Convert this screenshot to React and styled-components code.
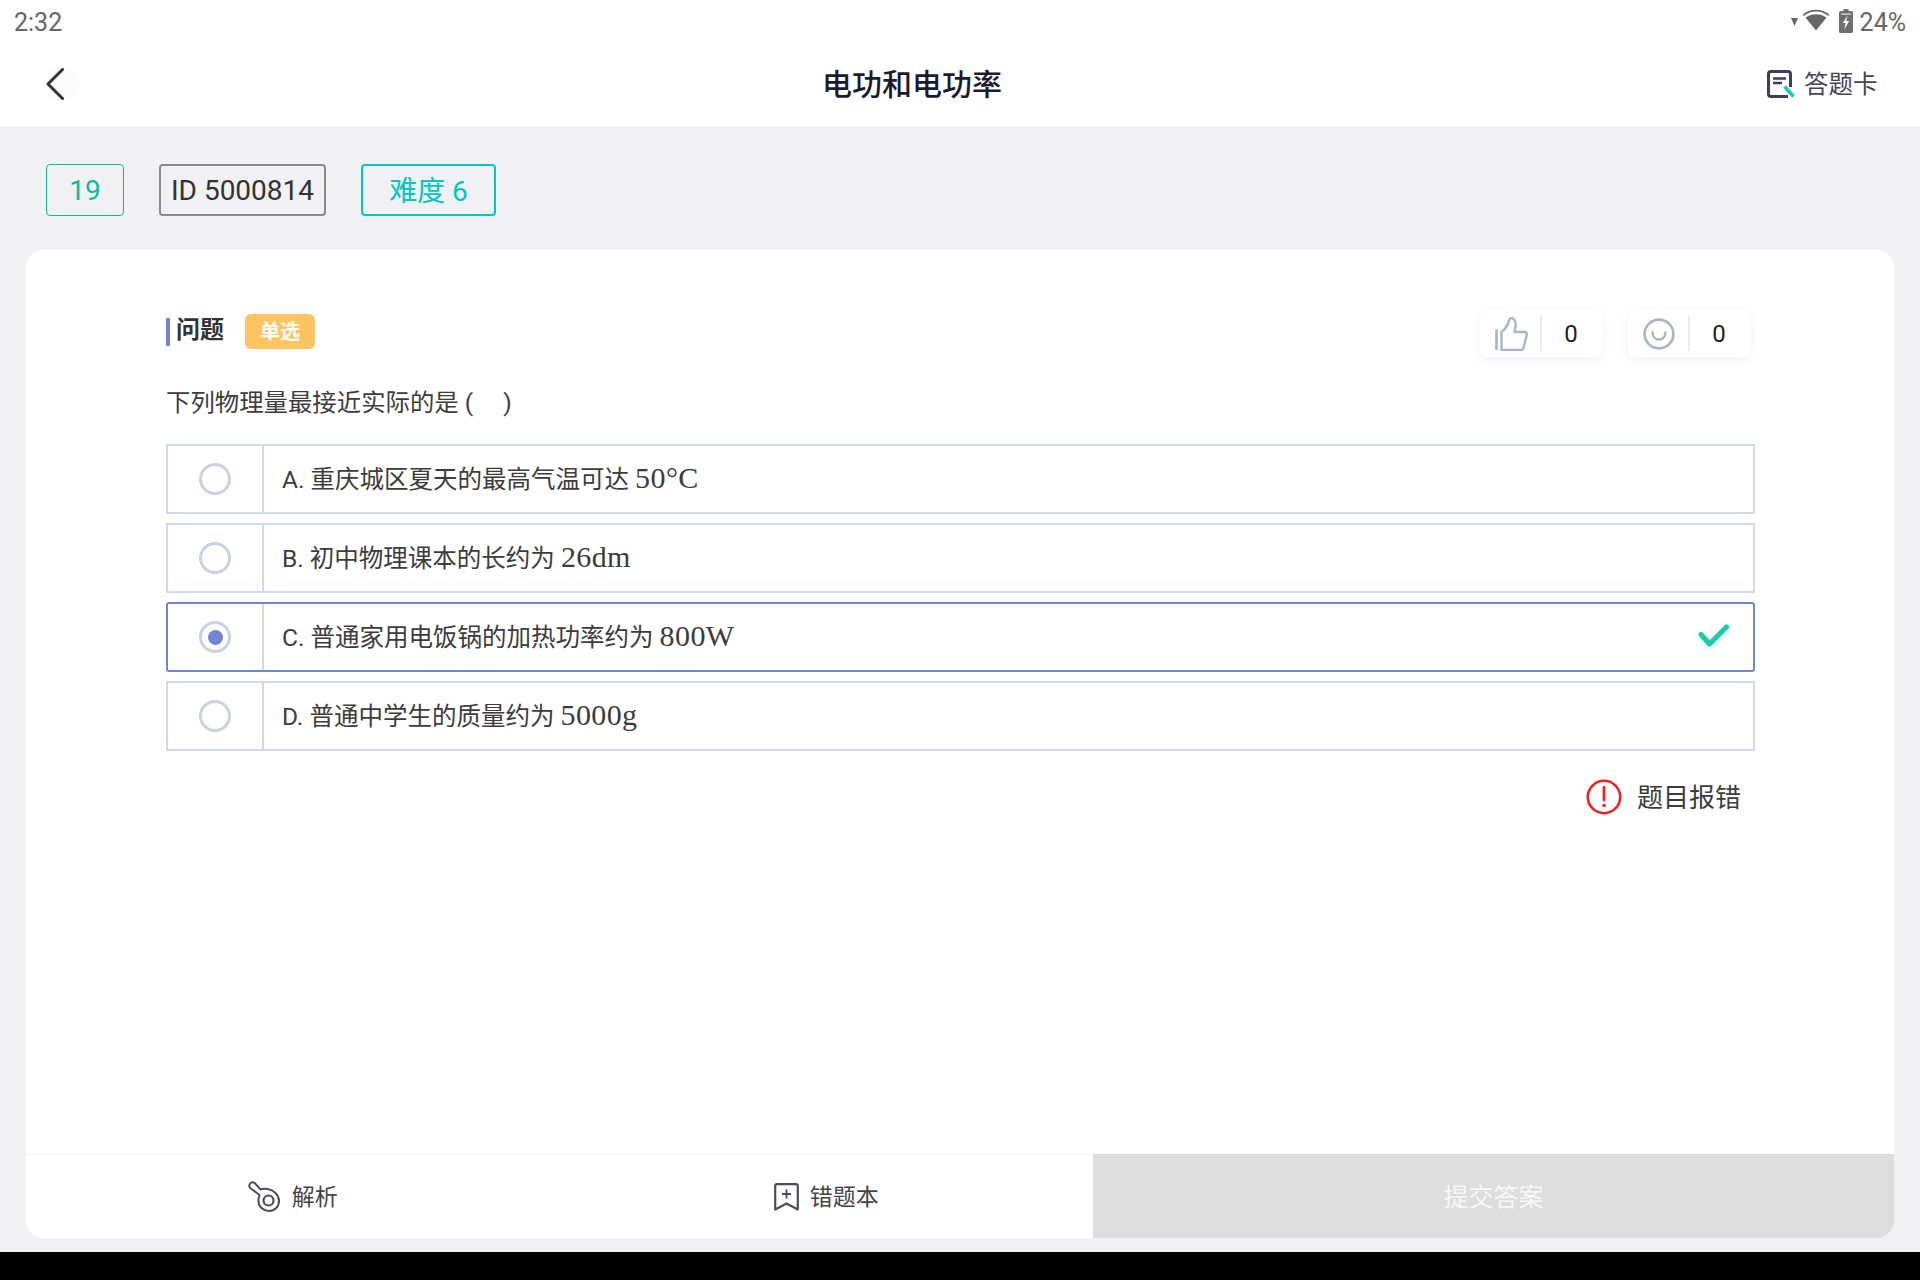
import React from "react";
import styled, { createGlobalStyle } from "styled-components";

const GlobalStyle = createGlobalStyle`
  html, body {
    margin: 0;
    padding: 0;
    background: #000;
  }
  body {
    font-family: Roboto, "Noto Sans CJK SC", sans-serif;
    color: #333;
  }
  * {
    box-sizing: border-box;
  }
`;

const options = [
  { letter: "A.", text: "重庆城区夏天的最高气温可达", math: "50°C" },
  { letter: "B.", text: "初中物理课本的长约为", math: "26dm" },
  { letter: "C.", text: "普通家用电饭锅的加热功率约为", math: "800W", selected: true },
  { letter: "D.", text: "普通中学生的质量约为", math: "5000g" },
];

const App = () => {
  return (
    <>
      <GlobalStyle />
      <Screen>
        <TopArea>
          <StatusBar>
            <span>2:32</span>
            <StatusRight>
              <svg width="7" height="8" viewBox="0 0 7 8">
                <path d="M0 0H7L3.5 8Z" fill="#666" />
              </svg>
              <WifiIcon width="28" height="22" viewBox="0 0 28 22">
                <path d="M1 6.5C8.5 0 19.5 0 27 6.5" fill="none" stroke="#666" strokeWidth="1.6" />
                <path d="M3.5 8.5C9.5 4 18.5 4 24.5 8.5L14 21.5Z" fill="#666" />
              </WifiIcon>
              <BatteryIcon width="14" height="24" viewBox="0 0 14 24">
                <path d="M4.5 0H9.5V2H12.5Q14 2 14 3.5V22.5Q14 24 12.5 24H1.5Q0 24 0 22.5V3.5Q0 2 1.5 2H4.5Z" fill="#6f6f6f" />
                <path d="M2.2 4.2H11.8V6H2.2Z" fill="#bdbdbd" />
                <path d="M8.6 6.5L3.8 14H6.6L5.2 20.5L10.2 12H7.2Z" fill="#fff" />
              </BatteryIcon>
              <span>24%</span>
            </StatusRight>
          </StatusBar>
          <NavBar>
            <BackButton>
              <svg width="18" height="32" viewBox="0 0 18 32">
                <path d="M16.5 1.5L2 16L16.5 30.5" fill="none" stroke="#333" strokeWidth="3" strokeLinecap="round" strokeLinejoin="round" />
              </svg>
            </BackButton>
            <PageTitle>电功和电功率</PageTitle>
            <AnswerCard>
              <svg width="28" height="28" viewBox="0 0 28 28">
                <path d="M21 26.5H4Q1.5 26.5 1.5 24V4Q1.5 1.5 4 1.5H21Q23.5 1.5 23.5 4V17" fill="none" stroke="#3f3f5a" strokeWidth="3" />
                <path d="M6 8.5H19M6 13H15" stroke="#3f3f5a" strokeWidth="2.4" />
                <path d="M17.5 16.5L26.5 26.5" stroke="#12cdbf" strokeWidth="3.4" />
              </svg>
              <AnswerCardLabel>答题卡</AnswerCardLabel>
            </AnswerCard>
          </NavBar>
        </TopArea>

        <TagRow>
          <NumberTag>19</NumberTag>
          <IdTag>ID 5000814</IdTag>
          <LevelTag>难度 6</LevelTag>
        </TagRow>

        <Card>
          <CardBody>
            <QuestionHead>
              <TitleGroup>
                <TitleMark />
                <SectionTitle>问题</SectionTitle>
                <TypeBadge>单选</TypeBadge>
              </TitleGroup>
              <Reactions>
                <ReactionPill>
                  <ReactionIcon>
                    <svg width="33" height="34" viewBox="0 0 33 34">
                      <path d="M1.5 12.5V33" stroke="#a9b4c8" strokeWidth="2.6" />
                      <path d="M6.5 33V15C10 13 13 7 14.5 2.5C15 .8 17 .8 18.5 2C20.5 3.5 21 6 20.5 9L19.5 15H29.5C31.5 15 32 16.5 31.7 18L28.5 31C28.2 32.3 27.4 33 26 33Z" fill="none" stroke="#a9b4c8" strokeWidth="2.4" strokeLinejoin="round" />
                    </svg>
                  </ReactionIcon>
                  <ReactionCount>0</ReactionCount>
                </ReactionPill>
                <ReactionPill>
                  <ReactionIcon>
                    <svg width="32" height="32" viewBox="0 0 32 32">
                      <circle cx="16" cy="16" r="14.4" fill="none" stroke="#a9b4c8" strokeWidth="2.6" />
                      <path d="M9.5 14.5C10 24 22 24 22.5 14.5" fill="none" stroke="#a9b4c8" strokeWidth="2.4" strokeLinecap="round" />
                    </svg>
                  </ReactionIcon>
                  <ReactionCount>0</ReactionCount>
                </ReactionPill>
              </Reactions>
            </QuestionHead>

            <QuestionText>下列物理量最接近实际的是 (&nbsp;&nbsp;&nbsp;&nbsp;&nbsp;)</QuestionText>

            <OptionList>
              {options.map((option) => (
                <OptionRow key={option.letter} $selected={option.selected}>
                  <RadioCell>
                    <Radio $selected={option.selected} />
                  </RadioCell>
                  <OptionContent>
                    <OptionLabel>
                      {option.letter} {option.text} <MathText>{option.math}</MathText>
                    </OptionLabel>
                    {option.selected && (
                      <CheckMark width="34" height="28" viewBox="0 0 34 28">
                        <path d="M4 11.5L12.5 21L29.5 4" fill="none" stroke="#1fcba6" strokeWidth="5" strokeLinecap="round" strokeLinejoin="round" />
                      </CheckMark>
                    )}
                  </OptionContent>
                </OptionRow>
              ))}
            </OptionList>

            <ReportRow>
              <svg width="36" height="36" viewBox="0 0 36 36">
                <circle cx="18" cy="18" r="16.2" fill="none" stroke="#ee2222" strokeWidth="2.6" />
                <path d="M18 8.5V21" stroke="#ee2222" strokeWidth="2.8" strokeLinecap="round" />
                <circle cx="18" cy="26.5" r="1.8" fill="#ee2222" />
              </svg>
              <ReportLabel>题目报错</ReportLabel>
            </ReportRow>
          </CardBody>

          <CardFooter>
            <FooterAction>
              <svg width="33" height="31" viewBox="0 0 33 31">
                <path d="M2.2 7C.8 5.5 1 3.3 2.5 2.2C4 1 6 1.2 7.3 2.7L12.5 8.5C14.5 7.8 17 7.6 19.5 8C26 9 31 14 31 20C31 26 26.5 30 21 30C15.5 30 10.8 26 10.5 20.5C10.4 18 10.8 15.8 11.5 14Z" fill="none" stroke="#4a4f57" strokeWidth="2" strokeLinejoin="round" />
                <circle cx="20.5" cy="19.5" r="5" fill="none" stroke="#4a4f57" strokeWidth="2.2" />
              </svg>
              <FooterLabel>解析</FooterLabel>
            </FooterAction>
            <FooterAction>
              <svg width="25" height="28" viewBox="0 0 25 28">
                <path d="M3 1.2H22Q23.8 1.2 23.8 3V26.5L12.5 20.5L1.2 26.5V3Q1.2 1.2 3 1.2Z" fill="none" stroke="#4a4f57" strokeWidth="2.2" strokeLinejoin="round" />
                <path d="M12.5 6.5V15.5M8 11H17" stroke="#4a4f57" strokeWidth="1.9" />
              </svg>
              <FooterLabel>错题本</FooterLabel>
            </FooterAction>
            <SubmitButton>提交答案</SubmitButton>
          </CardFooter>
        </Card>
      </Screen>
      <BottomStrip />
    </>
  );
};

export default App;

const Screen = styled.div`
  display: flex;
  flex-direction: column;
  height: 1252px;
  padding-bottom: 14px;
  background: #f1f1f3;
`;

const BottomStrip = styled.div`
  height: 28px;
  background: #000;
`;

const TopArea = styled.div`
  background: #fff;
`;

const StatusBar = styled.div`
  display: flex;
  justify-content: space-between;
  align-items: center;
  height: 42px;
  padding: 2px 14px 0;
  font-size: 25px;
  color: #666;
`;

const StatusRight = styled.div`
  display: flex;
  align-items: center;
  gap: 7px;
`;

const WifiIcon = styled.svg`
  margin-left: -3px;
  margin-top: -4px;
`;

const BatteryIcon = styled.svg`
  margin-left: 2px;
  margin-top: -3px;
`;

const NavBar = styled.div`
  display: grid;
  grid-template-columns: 57px 1fr 153px;
  align-items: center;
  height: 84px;
`;

const BackButton = styled.div`
  display: flex;
  align-items: center;
  justify-content: flex-start;
  width: 34px;
  height: 34px;
  margin-left: 46px;
  border-radius: 50%;
  background: #fbfbfb;
`;

const PageTitle = styled.div`
  padding-bottom: 5px;
  font-size: 30px;
  font-weight: 500;
  text-align: center;
  color: #1b1b2d;
`;

const AnswerCard = styled.div`
  display: flex;
  align-items: center;
  gap: 9px;
  font-size: 24.5px;
  color: #444458;
`;

const AnswerCardLabel = styled.span`
  padding-bottom: 4px;
`;

const TagRow = styled.div`
  display: flex;
  gap: 35px;
  padding: 38px 46px 34px;
`;

const Tag = styled.div`
  display: flex;
  align-items: center;
  justify-content: center;
  height: 52px;
  border-radius: 4px;
  font-size: 28px;
`;

const NumberTag = styled(Tag)`
  width: 78px;
  border: 1px solid #10b99a;
  color: #10b99a;
`;

const IdTag = styled(Tag)`
  width: 167px;
  border: 2px solid #8a8a8a;
  color: #333;
`;

const LevelTag = styled(Tag)`
  width: 135px;
  padding-bottom: 2px;
  border: 2px solid #00c8c0;
  color: #00c8c0;
`;

const Card = styled.div`
  display: flex;
  flex-direction: column;
  flex: 1;
  margin: 0 26px;
  border-radius: 18px;
  background: #fff;
  overflow: hidden;
`;

const CardBody = styled.div`
  flex: 1;
  padding: 60px 139px 0 140px;
`;

const QuestionHead = styled.div`
  display: flex;
  justify-content: space-between;
  align-items: center;
  height: 47px;
`;

const TitleGroup = styled.div`
  display: flex;
  align-items: center;
  padding-bottom: 4px;
`;

const TitleMark = styled.div`
  width: 4px;
  height: 28px;
  background: #7484d0;
`;

const SectionTitle = styled.div`
  margin: 0 21px 0 6px;
  padding-bottom: 3px;
  font-size: 24px;
  font-weight: 700;
  line-height: 30px;
  color: #333;
`;

const TypeBadge = styled.div`
  display: flex;
  align-items: center;
  justify-content: center;
  width: 70px;
  height: 35px;
  padding-bottom: 2px;
  border-radius: 6px;
  background: #fec45f;
  font-size: 20px;
  font-weight: 700;
  color: #fff;
`;

const Reactions = styled.div`
  display: flex;
  gap: 26px;
  margin-right: 5px;
`;

const ReactionPill = styled.div`
  display: flex;
  align-items: center;
  width: 122px;
  height: 47px;
  border-radius: 8px;
  background: #fff;
  box-shadow: 0 3px 12px rgba(120, 140, 210, 0.12);
`;

const ReactionIcon = styled.div`
  display: flex;
  align-items: center;
  justify-content: center;
  width: 62px;
  height: 35px;
  padding-left: 2px;
  border-right: 2px solid #e7eaf1;
`;

const ReactionCount = styled.div`
  flex: 1;
  padding-right: 2px;
  text-align: center;
  font-size: 24px;
  color: #222;
`;

const QuestionText = styled.div`
  margin-top: 28px;
  font-size: 24.4px;
  line-height: 36px;
  color: #3c3c3c;
`;

const OptionList = styled.div`
  display: flex;
  flex-direction: column;
  gap: 9px;
  margin-top: 23px;
`;

const OptionRow = styled.div`
  display: flex;
  height: 70px;
  border: 2px solid ${(props) => (props.$selected ? "#7484d0" : "#d0daea")};
  border-radius: ${(props) => (props.$selected ? "3px" : "0")};
`;

const RadioCell = styled.div`
  display: flex;
  align-items: center;
  justify-content: center;
  width: 96px;
  border-right: 2px solid #d0daea;
`;

const Radio = styled.div`
  display: flex;
  align-items: center;
  justify-content: center;
  width: 32px;
  height: 32px;
  border: 3px solid #c9d2e2;
  border-radius: 50%;

  &::after {
    content: "";
    display: ${(props) => (props.$selected ? "block" : "none")};
    width: 15px;
    height: 15px;
    border-radius: 50%;
    background: #7484d0;
  }
`;

const OptionContent = styled.div`
  display: flex;
  flex: 1;
  justify-content: space-between;
  align-items: center;
  padding: 0 22px 0 18px;
`;

const OptionLabel = styled.div`
  font-size: 24.5px;
  line-height: 36px;
  color: #3c3c3c;
`;

const MathText = styled.span`
  font-family: "Liberation Serif", serif;
  font-size: 30px;
  letter-spacing: 0.4px;
`;

const CheckMark = styled.svg`
  filter: drop-shadow(0 2px 3px rgba(31, 203, 166, 0.25));
`;

const ReportRow = styled.div`
  display: flex;
  justify-content: flex-end;
  align-items: center;
  gap: 15px;
  margin-top: 26px;
  padding-right: 14px;
  font-size: 26px;
  color: #3c3c3c;
`;

const ReportLabel = styled.span`
  padding-bottom: 3px;
`;

const CardFooter = styled.div`
  display: flex;
  height: 84px;
  border-top: 1px solid #f0f6fb;
`;

const FooterAction = styled.div`
  display: flex;
  flex: 1;
  align-items: center;
  justify-content: center;
  gap: 11px;
  font-size: 23px;
  color: #444;
`;

const FooterLabel = styled.span`
  padding-bottom: 3px;
`;

const SubmitButton = styled.div`
  display: flex;
  align-items: center;
  justify-content: center;
  width: 801px;
  margin-top: -1px;
  padding-bottom: 2px;
  background: #ddd;
  font-size: 25px;
  color: #f8f8f8;
`;
